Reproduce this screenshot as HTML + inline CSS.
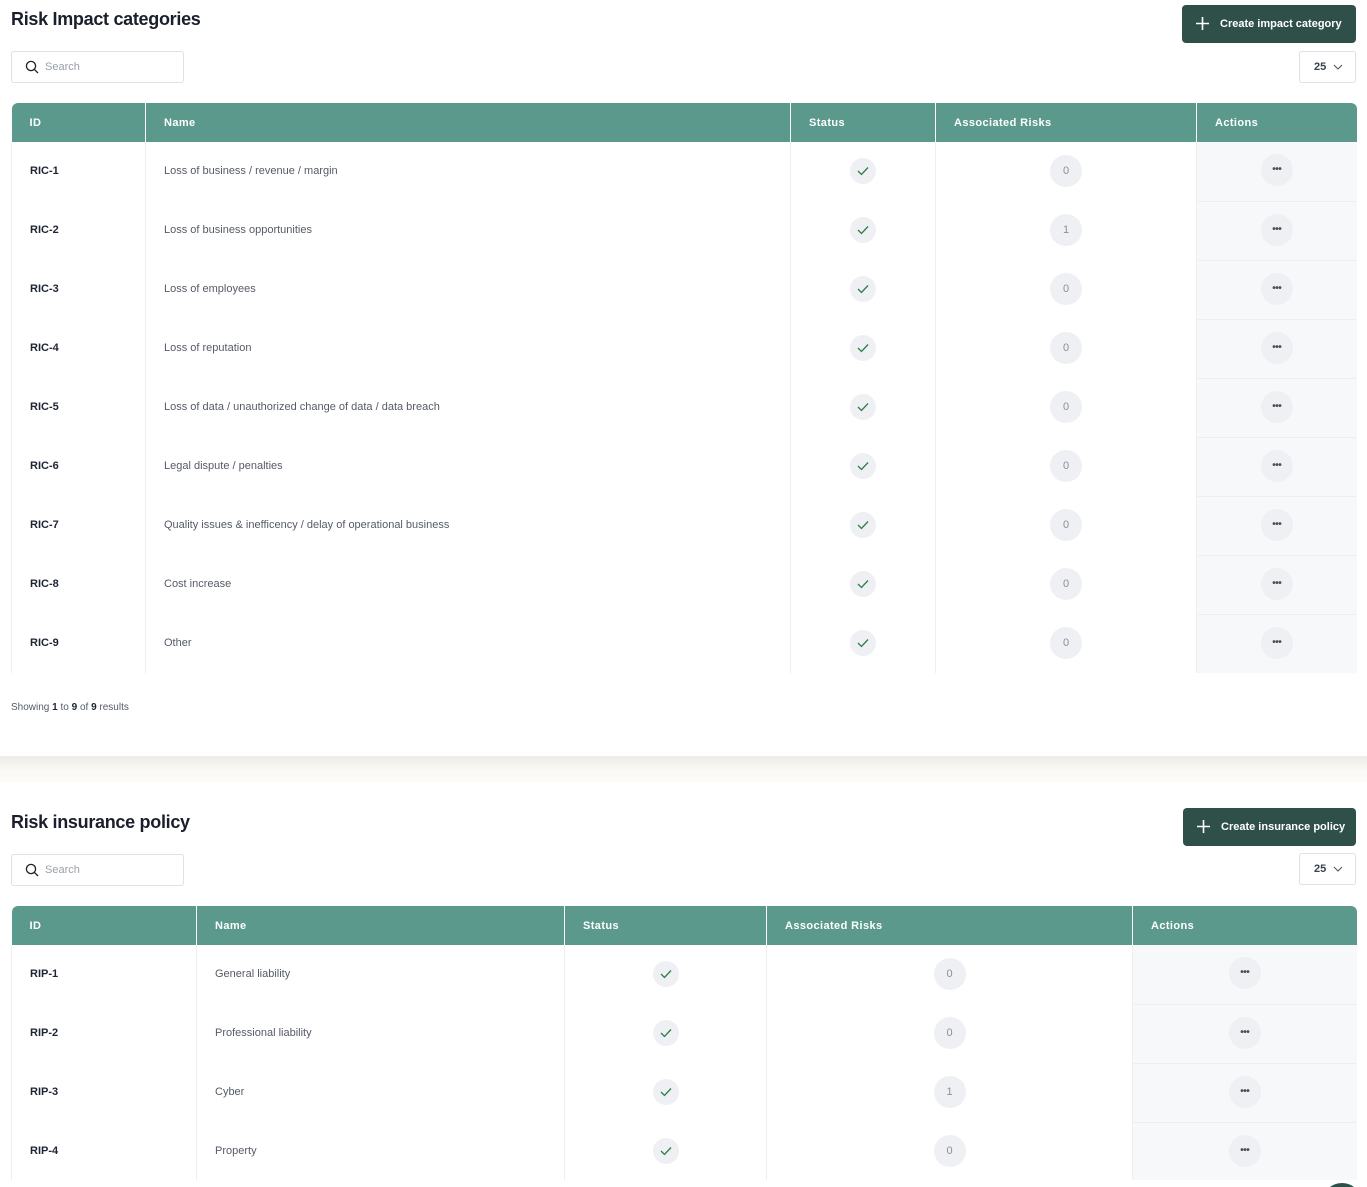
<!DOCTYPE html>
<html style="width:1367px;height:1187px;overflow:hidden"><head><meta charset="utf-8"><style>
*{box-sizing:border-box;margin:0;padding:0}
body{width:1367px;height:1187px;overflow:hidden;background:#fff;font-family:"Liberation Sans",sans-serif;color:#1d2433;position:relative}
.abs{position:absolute}
h1{position:absolute;left:11px;font-size:18px;font-weight:bold;color:#1a1f2b;letter-spacing:-0.3px}
.search{position:absolute;left:11px;width:173px;height:32px;border:1px solid #dfe1e6;border-radius:3px;font-size:11px;color:#9aa0aa;padding-left:33px;line-height:30px}
.search svg{position:absolute;left:13px;top:8px}
.btn{position:absolute;height:38px;background:#2f5049;border-radius:4px;color:#fff;font-size:11px;font-weight:bold;line-height:38px}
.btn svg{position:absolute;left:14px;top:12px}
.sel{position:absolute;left:1299px;width:57px;height:32px;border:1px solid #dfe1e6;border-radius:3px;font-size:11px;font-weight:bold;color:#3a4150;line-height:30px;padding-left:14px}
.sel svg{position:absolute;left:33px;top:12px}
table{position:absolute;left:11px;width:1345px;border-collapse:collapse;table-layout:fixed}
th{background:#5a998c;color:#fff;font-size:11px;font-weight:bold;text-align:left;height:39px;padding-left:18px;letter-spacing:0.4px;border-left:1px solid #fff}
th:first-child{border-left:none;border-top-left-radius:6px}
th:last-child{border-top-right-radius:6px}
td{height:59px;border-left:1px solid #eceef1;font-size:11px;color:#555b66;padding-left:18px;padding-bottom:2px}
td.id{font-weight:bold;color:#1d2433;border-left:1px solid #eceef1}
td.c{text-align:center;padding-left:0}
td.a{background:#f7f8fa;text-align:center;padding-left:0;border-bottom:1px solid #eceef1}
.circ{display:inline-block;width:26px;height:26px;border-radius:50%;background:#eff0f3;vertical-align:middle;line-height:26px;font-size:11px;color:#8a8f99;position:relative}
.big{width:32px;height:32px;line-height:32px}
.dots{color:#4a505c;font-weight:bold;font-size:10px;letter-spacing:-0.5px}
.circ svg{position:absolute;left:7px;top:8px}
</style></head><body>

<h1 style="top:9px">Risk Impact categories</h1>
<div class="search" style="top:51px"><svg width="14" height="14" viewBox="0 0 14 14"><circle cx="6" cy="6" r="4.6" fill="none" stroke="#222" stroke-width="1.3"/><path d="M9.4 9.4L13 13" stroke="#222" stroke-width="1.3"/></svg>Search</div>
<div class="btn" style="left:1182px;top:5px;width:174px;padding-left:38px"><svg width="13" height="13" viewBox="0 0 13 13"><path d="M6.5 0v13M0 6.5h13" stroke="#fff" stroke-width="1.6"/></svg>Create impact category</div>
<div class="sel" style="top:51px">25<svg width="10" height="7" viewBox="0 0 10 7"><path d="M1 1l4 4 4-4" fill="none" stroke="#555" stroke-width="1.1"/></svg></div>

<table style="top:103px">
<colgroup><col style="width:134px"><col style="width:645px"><col style="width:145px"><col style="width:261px"><col style="width:160px"></colgroup>
<tr><th>ID</th><th>Name</th><th>Status</th><th>Associated Risks</th><th>Actions</th></tr>
<tr><td class="id">RIC-1</td><td>Loss of business / revenue / margin</td><td class="c"><span class="circ"><svg width="12" height="10" viewBox="0 0 12 10"><path d="M1 5l3.5 3.5L11 1.5" fill="none" stroke="#2e7d46" stroke-width="1.3"/></svg></span></td><td class="c"><span class="circ big">0</span></td><td class="a"><span class="circ big dots">•••</span></td></tr>
<tr><td class="id">RIC-2</td><td>Loss of business opportunities</td><td class="c"><span class="circ"><svg width="12" height="10" viewBox="0 0 12 10"><path d="M1 5l3.5 3.5L11 1.5" fill="none" stroke="#2e7d46" stroke-width="1.3"/></svg></span></td><td class="c"><span class="circ big">1</span></td><td class="a"><span class="circ big dots">•••</span></td></tr>
<tr><td class="id">RIC-3</td><td>Loss of employees</td><td class="c"><span class="circ"><svg width="12" height="10" viewBox="0 0 12 10"><path d="M1 5l3.5 3.5L11 1.5" fill="none" stroke="#2e7d46" stroke-width="1.3"/></svg></span></td><td class="c"><span class="circ big">0</span></td><td class="a"><span class="circ big dots">•••</span></td></tr>
<tr><td class="id">RIC-4</td><td>Loss of reputation</td><td class="c"><span class="circ"><svg width="12" height="10" viewBox="0 0 12 10"><path d="M1 5l3.5 3.5L11 1.5" fill="none" stroke="#2e7d46" stroke-width="1.3"/></svg></span></td><td class="c"><span class="circ big">0</span></td><td class="a"><span class="circ big dots">•••</span></td></tr>
<tr><td class="id">RIC-5</td><td>Loss of data / unauthorized change of data / data breach</td><td class="c"><span class="circ"><svg width="12" height="10" viewBox="0 0 12 10"><path d="M1 5l3.5 3.5L11 1.5" fill="none" stroke="#2e7d46" stroke-width="1.3"/></svg></span></td><td class="c"><span class="circ big">0</span></td><td class="a"><span class="circ big dots">•••</span></td></tr>
<tr><td class="id">RIC-6</td><td>Legal dispute / penalties</td><td class="c"><span class="circ"><svg width="12" height="10" viewBox="0 0 12 10"><path d="M1 5l3.5 3.5L11 1.5" fill="none" stroke="#2e7d46" stroke-width="1.3"/></svg></span></td><td class="c"><span class="circ big">0</span></td><td class="a"><span class="circ big dots">•••</span></td></tr>
<tr><td class="id">RIC-7</td><td>Quality issues &amp; inefficency / delay of operational business</td><td class="c"><span class="circ"><svg width="12" height="10" viewBox="0 0 12 10"><path d="M1 5l3.5 3.5L11 1.5" fill="none" stroke="#2e7d46" stroke-width="1.3"/></svg></span></td><td class="c"><span class="circ big">0</span></td><td class="a"><span class="circ big dots">•••</span></td></tr>
<tr><td class="id">RIC-8</td><td>Cost increase</td><td class="c"><span class="circ"><svg width="12" height="10" viewBox="0 0 12 10"><path d="M1 5l3.5 3.5L11 1.5" fill="none" stroke="#2e7d46" stroke-width="1.3"/></svg></span></td><td class="c"><span class="circ big">0</span></td><td class="a"><span class="circ big dots">•••</span></td></tr>
<tr><td class="id">RIC-9</td><td>Other</td><td class="c"><span class="circ"><svg width="12" height="10" viewBox="0 0 12 10"><path d="M1 5l3.5 3.5L11 1.5" fill="none" stroke="#2e7d46" stroke-width="1.3"/></svg></span></td><td class="c"><span class="circ big">0</span></td><td class="a" style="border-bottom:none"><span class="circ big dots">•••</span></td></tr>
</table>

<div class="abs" style="left:11px;top:702px;font-size:10px;color:#555b66">Showing <b style="color:#1d2433">1</b> to <b style="color:#1d2433">9</b> of <b style="color:#1d2433">9</b> results</div>

<div class="abs" style="left:0;top:756px;width:1367px;height:26px;background:linear-gradient(#eeece8,#fbfaf7 60%,#fcfbf8)"></div>

<h1 style="top:812px">Risk insurance policy</h1>
<div class="search" style="top:854px"><svg width="14" height="14" viewBox="0 0 14 14"><circle cx="6" cy="6" r="4.6" fill="none" stroke="#222" stroke-width="1.3"/><path d="M9.4 9.4L13 13" stroke="#222" stroke-width="1.3"/></svg>Search</div>
<div class="btn" style="left:1183px;top:808px;width:173px;padding-left:38px"><svg width="13" height="13" viewBox="0 0 13 13"><path d="M6.5 0v13M0 6.5h13" stroke="#fff" stroke-width="1.6"/></svg>Create insurance policy</div>
<div class="sel" style="top:853px">25<svg width="10" height="7" viewBox="0 0 10 7"><path d="M1 1l4 4 4-4" fill="none" stroke="#555" stroke-width="1.1"/></svg></div>

<table style="top:906px">
<colgroup><col style="width:185px"><col style="width:368px"><col style="width:202px"><col style="width:366px"><col style="width:224px"></colgroup>
<tr><th style="height:38px">ID</th><th>Name</th><th>Status</th><th>Associated Risks</th><th>Actions</th></tr>
<tr><td class="id">RIP-1</td><td>General liability</td><td class="c"><span class="circ"><svg width="12" height="10" viewBox="0 0 12 10"><path d="M1 5l3.5 3.5L11 1.5" fill="none" stroke="#2e7d46" stroke-width="1.3"/></svg></span></td><td class="c"><span class="circ big">0</span></td><td class="a"><span class="circ big dots">•••</span></td></tr>
<tr><td class="id">RIP-2</td><td>Professional liability</td><td class="c"><span class="circ"><svg width="12" height="10" viewBox="0 0 12 10"><path d="M1 5l3.5 3.5L11 1.5" fill="none" stroke="#2e7d46" stroke-width="1.3"/></svg></span></td><td class="c"><span class="circ big">0</span></td><td class="a"><span class="circ big dots">•••</span></td></tr>
<tr><td class="id">RIP-3</td><td>Cyber</td><td class="c"><span class="circ"><svg width="12" height="10" viewBox="0 0 12 10"><path d="M1 5l3.5 3.5L11 1.5" fill="none" stroke="#2e7d46" stroke-width="1.3"/></svg></span></td><td class="c"><span class="circ big">1</span></td><td class="a"><span class="circ big dots">•••</span></td></tr>
<tr><td class="id">RIP-4</td><td>Property</td><td class="c"><span class="circ"><svg width="12" height="10" viewBox="0 0 12 10"><path d="M1 5l3.5 3.5L11 1.5" fill="none" stroke="#2e7d46" stroke-width="1.3"/></svg></span></td><td class="c"><span class="circ big">0</span></td><td class="a" style="border-bottom:none"><span class="circ big dots">•••</span></td></tr>
</table>
<div class="abs" style="left:0;top:1180px;width:1367px;height:7px;background:#fff;overflow:hidden"><div class="abs" style="left:1322px;top:3px;width:40px;height:40px;border-radius:50%;background:#2f5049"></div></div>
</body></html>
